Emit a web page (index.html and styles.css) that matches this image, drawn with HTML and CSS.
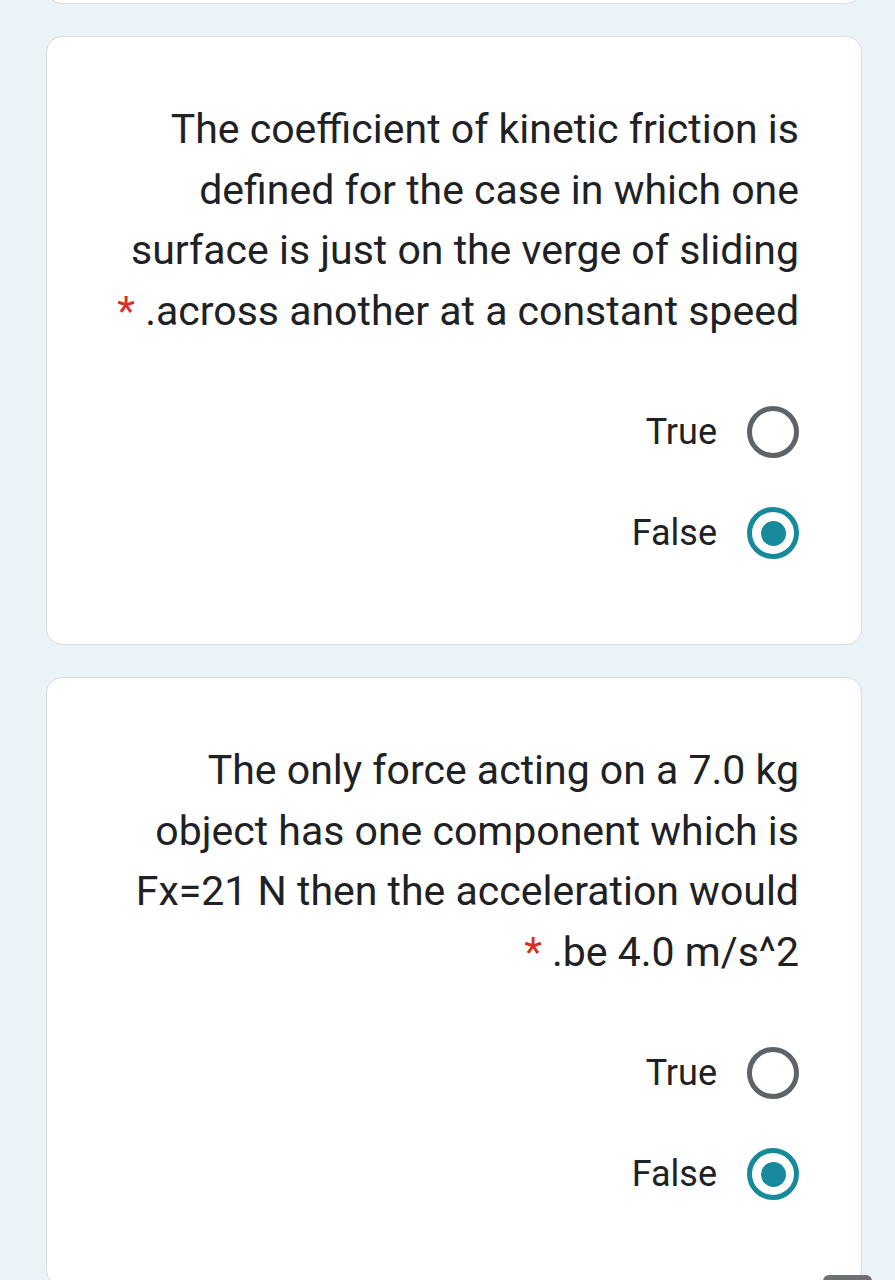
FILE: index.html
```html
<!DOCTYPE html>
<html>
<head>
<meta charset="utf-8">
<link rel="stylesheet" href="styles.css">
</head>
<body>
<div class="page">
  <div class="card card-prev"></div>

  <div class="card">
    <div class="question">The coefficient of kinetic friction is<br>defined for the case in which one<br>surface is just on the verge of sliding<br><span class="req">*</span> .across another at a constant speed</div>
    <div class="options">
      <div class="option"><span class="label">True</span><span class="radio"></span></div>
      <div class="option"><span class="label">False</span><span class="radio checked"></span></div>
    </div>
  </div>

  <div class="card">
    <div class="question">The only force acting on a 7.0 kg<br>object has one component which is<br>Fx=21 N then the acceleration would<br><span class="req">*</span> .be 4.0 m/s^2</div>
    <div class="options">
      <div class="option"><span class="label">True</span><span class="radio"></span></div>
      <div class="option"><span class="label">False</span><span class="radio checked"></span></div>
    </div>
  </div>
</div>
<div class="fab"></div>
</body>
</html>
```
FILE: styles.css
```css
html, body {
  margin: 0;
  padding: 0;
}
body {
  background: #eaf3f7;
  overflow: hidden;
  height: 1280px;
}
.page {
  margin: -36px 33px 0 46px;
  display: flex;
  flex-direction: column;
  gap: 32px;
}
.card {
  background: #ffffff;
  border: 1px solid #d9dde0;
  border-radius: 16px;
  padding: 62px 62px 85px 62px;
}
.card-prev {
  height: 38px;
  padding: 0;
}
.question {
  font-family: Roboto, "Liberation Sans", sans-serif;
  font-size: 41px;
  line-height: 60.5px;
  color: #202124;
  text-align: right;
}
.req {
  color: #d93025;
}
.options {
  margin-top: 65px;
  display: flex;
  flex-direction: column;
  gap: 49px;
}
.option {
  display: flex;
  justify-content: flex-end;
  align-items: center;
  gap: 30px;
  height: 52px;
}
.label {
  font-family: Roboto, "Liberation Sans", sans-serif;
  font-size: 36px;
  color: #202124;
}
.radio {
  box-sizing: border-box;
  width: 52px;
  height: 52px;
  border: 5px solid #5f6368;
  border-radius: 50%;
  display: flex;
  align-items: center;
  justify-content: center;
}
.radio.checked {
  border-color: #16899a;
}
.radio.checked::after {
  content: "";
  width: 25px;
  height: 25px;
  border-radius: 50%;
  background: #16899a;
}
.fab {
  position: fixed;
  left: 823px;
  top: 1275px;
  width: 49px;
  height: 20px;
  background: #6d6f72;
  border-radius: 6px;
}
```
